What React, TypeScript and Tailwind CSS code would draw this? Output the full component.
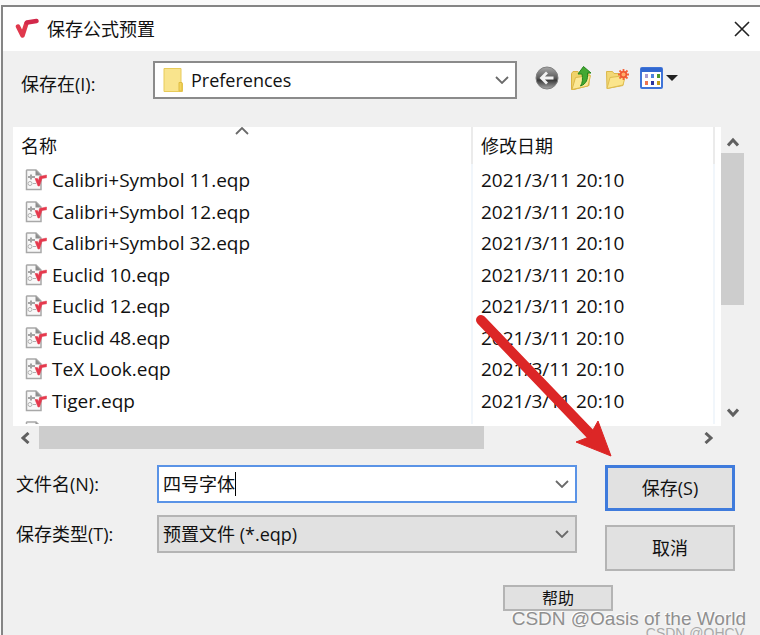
import React, { useState } from 'react'

const files = [
	'Calibri+Symbol 11.eqp',
	'Calibri+Symbol 12.eqp',
	'Calibri+Symbol 32.eqp',
	'Euclid 10.eqp',
	'Euclid 12.eqp',
	'Euclid 48.eqp',
	'TeX Look.eqp',
	'Tiger.eqp',
	'Times.eqp',
]

function Chevron({ className }: { className?: string }) {
	return (
		<svg viewBox="0 0 14 8" width="14" height="8" className={className} aria-hidden="true">
			<path d="M1 1l6 6 6-6" fill="none" stroke="#6a6a6a" strokeWidth="1.8" />
		</svg>
	)
}

function ScrollArrow({ className }: { className?: string }) {
	return (
		<svg viewBox="0 0 12 10" width="12" height="10" className={className} aria-hidden="true">
			<path d="M1 1.500 6 7l5-5.500" fill="none" stroke="#606060" strokeWidth="3" />
		</svg>
	)
}

function RootLogo() {
	return (
		<svg viewBox="0 0 24 22" width="24" height="22" aria-hidden="true">
			<path d="M3 8.500 7.500 17.500 11.500 5" fill="none" stroke="#e0384c" strokeWidth="4.500" strokeLinecap="round" strokeLinejoin="round" />
			<path d="M12 4.500 21.500 3" stroke="#d2284a" strokeWidth="4.500" strokeLinecap="round" />
		</svg>
	)
}

function FileIcon() {
	return (
		<svg viewBox="0 0 22 22" width="22" height="22" className="shrink-0" aria-hidden="true">
			<path d="M2 1h9l5 5v14.500H1.500V1.500z" fill="#f8f8f8" stroke="#a8a8a8" strokeWidth="1.500" />
			<path d="M10.500 1v5.500H16z" fill="#8d8d8d" />
			<path d="M3 8h7M6 5.500v5" stroke="#a3a3a3" strokeWidth="2" />
			<circle cx="5" cy="14.500" r="2" fill="none" stroke="#b0b0b0" />
			<path d="M8 14.500h3" stroke="#b0b0b0" />
			<path d="M10 9.500 12.500 9.500 13.500 11.500 14.500 7.500 21.500 6v2.800L17 9.500 14.500 17 13 17z" fill="#e5394d" stroke="#e5394d" strokeWidth=".5" />
		</svg>
	)
}

function FolderIcon() {
	return (
		<svg viewBox="0 0 20 24" width="20" height="24" aria-hidden="true">
			<path d="M1 .5h17v14l1.500 1V23.500H1z" fill="#f9e48d" stroke="#e8cb5a" />
			<path d="M16 14.500h3V23h-3z" fill="#f3d55f" stroke="#dfbd42" />
		</svg>
	)
}

function BackIcon() {
	return (
		<svg viewBox="0 0 24 24" width="24" height="24" aria-hidden="true">
			<defs>
				<linearGradient id="ball" x1="0" y1="0" x2="0" y2="1">
					<stop offset="0" stopColor="#a8a8a8" />
					<stop offset=".5" stopColor="#5c5c5c" />
					<stop offset=".6" stopColor="#383838" />
					<stop offset="1" stopColor="#aaa" />
				</linearGradient>
			</defs>
			<circle cx="12" cy="12" r="11" fill="url(#ball)" stroke="#808080" />
			<path d="M18.500 12H7M12 6.500 6.500 12l5.500 5.500" fill="none" stroke="#f2f2f2" strokeWidth="2.800" />
		</svg>
	)
}

function UpIcon() {
	return (
		<svg viewBox="0 0 24 24" width="24" height="24" aria-hidden="true">
			<path d="M1.500 7.500 3 5.500h5l1.500 2H19v12L4 23.500H1.500z" fill="#efd26a" stroke="#d9b343" />
			<path d="M5.500 11.500 20.500 9.500 18 20 2 23.500z" fill="#fbe896" stroke="#dcb84a" />
			<path d="M13.500.5 21 7h-3.500c.5 6-1 11-7 13 2-3 2.500-7 1.500-12H8z" fill="#43a832" stroke="#24851c" />
		</svg>
	)
}

function NewFolderIcon() {
	return (
		<svg viewBox="0 0 24 24" width="24" height="24" aria-hidden="true">
			<path d="M1.500 5.500h6l1.500 2h9v12L2 22.500z" fill="#f2d876" stroke="#dcb84a" />
			<path d="M5 11.500 20.500 9.500 18 19 2 22.500z" fill="#fbe58c" stroke="#dfbd50" />
			<path d="M18.500 3v11M13 8.500h11M14.500 4.500l8 8M22.500 4.500l-8 8" stroke="#f4633a" strokeWidth="1.800" />
			<circle cx="18.500" cy="8.500" r="2.800" fill="#ffad6b" stroke="#ef5530" strokeWidth="1.500" />
		</svg>
	)
}

function ViewIcon() {
	return (
		<svg viewBox="0 0 24 22" width="24" height="22" aria-hidden="true">
			<rect x="1" y="1" width="21" height="20" rx="1" fill="#fff" stroke="#3f74d8" strokeWidth="2" />
			<path d="M1 1h21v4H1z" fill="#3268d0" />
			<path d="M5 7h3v4H5z" fill="#a79bd0" />
			<path d="M11 7h3v4h-3z" fill="#4d84dd" />
			<path d="M17 7h3v4h-3z" fill="#4c9a2a" />
			<path d="M5 14h3v4H5z" fill="#ee7450" />
			<path d="M11 14h3v4h-3z" fill="#2a35a0" />
			<path d="M17 14h3v4h-3z" fill="#c5a018" />
		</svg>
	)
}

function TitleBar() {
	return (
		<header className="flex h-11 items-center justify-between bg-white pl-3 pr-[9px]">
			<div className="flex items-center gap-2">
				<RootLogo />
				<h1 className="text-lg leading-6">保存公式预置</h1>
			</div>
			<button aria-label="关闭" className="p-px">
				<svg viewBox="0 0 16 16" width="16" height="16" aria-hidden="true">
					<path d="M1 1l14 14M15 1 1 15" stroke="#222" strokeWidth="1.600" />
				</svg>
			</button>
		</header>
	)
}

function LookIn() {
	return (
		<div className="flex items-center pt-2.5 pl-[18px]">
			<label htmlFor="look-in" className="w-[132px] pt-2 text-lg leading-6">
				保存在(I):
			</label>
			<div className="grid flex-1 items-center border-2 border-[#8b8b8b] bg-white">
				<select id="look-in" className="col-start-1 row-start-1 h-[34px] w-full appearance-none pl-9 text-lg outline-none">
					<option>Preferences</option>
				</select>
				<div className="pointer-events-none col-start-1 row-start-1 flex items-center justify-between pl-2 pr-1.5">
					<FolderIcon />
					<Chevron />
				</div>
			</div>
			<div className="mr-[82px] flex items-center gap-[11px] pb-1 pl-[18px]">
				<button aria-label="后退"><BackIcon /></button>
				<button aria-label="向上一级"><UpIcon /></button>
				<button aria-label="新建文件夹"><NewFolderIcon /></button>
				<button aria-label="查看" className="flex items-center gap-0.5">
					<ViewIcon />
					<svg viewBox="0 0 12 6" width="12" height="6" aria-hidden="true">
						<path d="M0 0h12L6 6z" fill="#222" />
					</svg>
				</button>
			</div>
		</div>
	)
}

function FileList() {
	return (
		<div className="mt-7 mr-4 ml-2.5 grid grid-cols-[1fr_23px]">
			<div className="h-[299px] overflow-hidden border-b-2 border-white bg-white pr-1.5">
				<table className="w-full table-fixed border-collapse text-[19px] leading-6">
					<thead>
						<tr className="h-[37px] text-left text-lg">
							<th className="relative border-r-2 border-[#ebebeb] pl-2 font-normal">
								名称
								<Chevron className="absolute top-0 left-1/2 -translate-x-1/2 rotate-180" />
							</th>
							<th className="w-[242px] border-r-2 border-[#ebebeb] pl-2 font-normal">修改日期</th>
						</tr>
					</thead>
					<tbody>
						{files.map((name) => (
							<tr key={name} className="odd:h-8 even:h-[31px]">
								<td className="border-r-2 border-[#f1f6fb] pl-3">
									<div className="flex items-center gap-[5px]">
										<FileIcon />
										<span>{name}</span>
									</div>
								</td>
								<td className="border-r-2 border-[#f1f6fb] pl-2">2021/3/11 20:10</td>
							</tr>
						))}
					</tbody>
				</table>
			</div>
			<div className="flex flex-col items-center pt-2.5 pb-2">
				<ScrollArrow className="rotate-180" />
				<div className="mt-1.5 h-[152px] w-full bg-[#cdcdcd]" />
				<ScrollArrow className="mt-auto" />
			</div>
			<div className="flex h-[23px] items-center px-1.5">
				<ScrollArrow className="rotate-90" />
				<div className="ml-2 h-full w-[64%] bg-[#cdcdcd]" />
				<ScrollArrow className="ml-auto -rotate-90" />
			</div>
		</div>
	)
}

function SaveForm() {
	const [name, setName] = useState('四号字体')

	return (
		<form className="flex pt-4 pr-[25px] pl-[13px]" onSubmit={(e) => e.preventDefault()}>
			<div className="flex-1">
				<div className="flex items-center">
					<label htmlFor="file-name" className="w-[141px] text-lg leading-6">
						文件名(N):
					</label>
					<div className="flex h-[38px] flex-1 items-center border-2 border-[#5a93e6] bg-white pr-1.5 pl-1">
						<input
							id="file-name"
							value={name}
							onChange={(e) => setName(e.target.value)}
							className="field-sizing-content text-lg leading-6 caret-transparent outline-none"
						/>
						<span className="h-6 w-px bg-black" />
						<Chevron className="ml-auto" />
					</div>
				</div>
				<div className="mt-3 flex items-center">
					<label htmlFor="file-type" className="w-[141px] text-lg leading-6">
						保存类型(T):
					</label>
					<div className="grid flex-1 items-center border-2 border-[#b4b4b4] bg-[#e1e1e1]">
						<select id="file-type" className="col-start-1 row-start-1 h-[34px] w-full appearance-none pl-1 text-lg outline-none">
							<option>预置文件 (*.eqp)</option>
						</select>
						<Chevron className="pointer-events-none col-start-1 row-start-1 mr-1.5 justify-self-end" />
					</div>
				</div>
			</div>
			<div className="ml-7 flex w-[130px] flex-col gap-3.5 text-lg leading-6">
				<button type="submit" className="h-[46px] border-3 border-[#3f7bdc] bg-[#e1e1e1]">保存(S)</button>
				<button type="button" className="h-[46px] border-2 border-[#b4b4b4] bg-[#e1e1e1]">取消</button>
			</div>
		</form>
	)
}

export default function App() {
	return (
		<div className="relative flex min-h-screen flex-col overflow-hidden bg-[#fafafa] pt-[5px] pl-px font-['Open_Sans','Noto_Sans_CJK_SC',sans-serif] text-[#111]">
			<main className="flex-1 border-t-2 border-l-2 border-[#858585] bg-[#f0f0f0]">
				<TitleBar />
				<LookIn />
				<FileList />
				<SaveForm />
				<div className="mt-3.5 flex justify-end pr-[147px]">
					<button className="h-[26px] w-[110px] border-2 border-[#b4b4b4] bg-[#e1e1e1] text-base leading-5">帮助</button>
				</div>
			</main>

			{/* pointer to the save button */}
			<svg viewBox="0 0 140 144" width="140" height="144" className="pointer-events-none absolute top-[314px] right-[146px]" aria-hidden="true">
				<path d="M7 6 122 126" stroke="#dc2626" strokeWidth="10" strokeLinecap="round" />
				<path d="M137 142 102 128 115 123 124 107z" fill="#dc2626" stroke="#dc2626" />
			</svg>

			<p className="absolute right-3.5 bottom-1 font-['Liberation_Sans',sans-serif] text-[19px] leading-6 text-[#8f8f8f] text-shadow-[-1px_-1px_0_#fff]">
				CSDN @Oasis of the World
			</p>
			<p className="absolute right-4 -bottom-1.5 font-['Liberation_Sans',sans-serif] text-sm leading-4 text-[#a9a9a9]">
				CSDN @QHCV
			</p>
		</div>
	)
}
